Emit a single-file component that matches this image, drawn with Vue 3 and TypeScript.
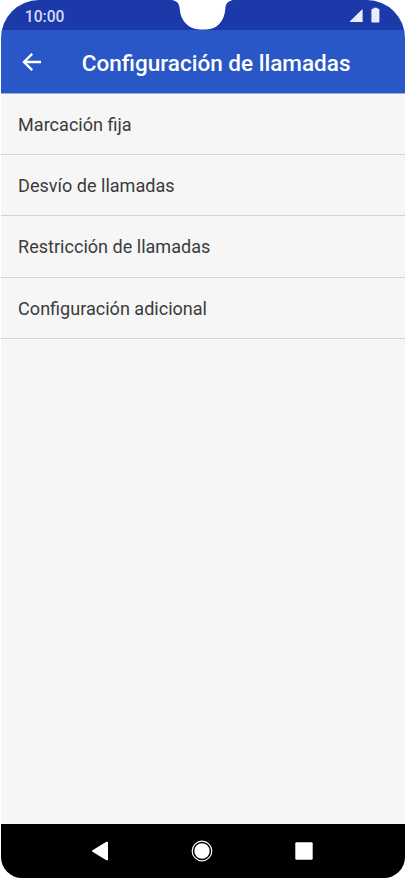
<script setup lang="ts">
const title = 'Configuración de llamadas'
const items: string[] = [
  'Marcación fija',
  'Desvío de llamadas',
  'Restricción de llamadas',
  'Configuración adicional',
]
</script>

<template>
  <div class="phone">
    <div class="status">
      <span class="time">10:00</span>
      <svg class="indicators" width="32" height="16" viewBox="0 0 32 16">
        <path d="M0 14.900V14.200L12 2.400H12.600V14.900Z" />
        <path d="M23.600 0.800H27.400V1.800H28.400Q29.400 1.800 29.400 2.800V14.500Q29.400 15.500 28.400 15.500H22.400Q21.400 15.500 21.400 14.500V2.800Q21.400 1.800 22.400 1.800H23.600Z" />
      </svg>
      <svg class="notch" width="66" height="30" viewBox="0 0 66 30">
        <path d="M2 0C7.500 1 9.500 4 9.700 9C10.500 21 19 29.500 30 29.500H36C47 29.500 54.500 21 55.300 9C55.500 4 57.500 1 63 0Z" />
      </svg>
    </div>
    <header class="bar">
      <button class="back" aria-label="Atrás">
        <svg width="20" height="20" viewBox="0 0 20 20">
          <path d="M19 10H2.500M10.200 1.800L2 10L10.200 18.200" />
        </svg>
      </button>
      <h1 class="title">{{ title }}</h1>
    </header>
    <ul class="list">
      <li v-for="item in items" :key="item" class="row">{{ item }}</li>
    </ul>
    <nav class="nav">
      <svg width="18" height="20" viewBox="0 0 18 20">
        <path d="M1.500 9.200L15 1.100Q17 0.200 17 1.600V18.400Q17 19.800 15 18.900L1.500 10.800Q0.300 10 1.500 9.200Z" />
      </svg>
      <svg width="22" height="22" viewBox="0 0 22 22">
        <circle class="ring" cx="11" cy="11" r="9.800" />
        <circle cx="11" cy="11" r="7.700" />
      </svg>
      <svg width="18" height="18" viewBox="0 0 18 18">
        <rect x="0.300" y="0.300" width="17.400" height="17.400" rx="1.200" />
      </svg>
    </nav>
  </div>
</template>

<style>
body {
  background: #fff;
}
</style>

<style scoped>
.phone {
  box-sizing: border-box;
  width: 404px;
  height: 877.500px;
  margin-left: 0.500px;
  display: flex;
  flex-direction: column;
  overflow: hidden;
  border-radius: 38px 38px 21px 21px;
  background: #f6f6f6;
  font-family: Roboto, sans-serif;
}
.status {
  position: relative;
  flex: none;
  height: 30px;
  box-sizing: border-box;
  padding: 0 22.500px 0 24.300px;
  display: flex;
  align-items: center;
  justify-content: space-between;
  background: #1c39a9;
}
.time {
  padding-top: 4px;
  font-size: 15.600px;
  font-weight: 500;
  line-height: 20px;
  color: #d3dcf7;
}
.indicators {
  fill: #e9eefc;
}
.notch {
  position: absolute;
  left: 169.300px;
  top: 0;
  fill: #fff;
}
.bar {
  flex: none;
  height: 64px;
  box-sizing: border-box;
  border-bottom: 1px solid #9aaee6;
  padding-left: 21.300px;
  display: flex;
  align-items: center;
  background: #2a57c7;
}
.back {
  display: flex;
  padding: 0;
  border: 0;
  background: none;
}
.back svg {
  fill: none;
  stroke: #fff;
  stroke-width: 2.400;
}
.title {
  margin: 5px 0 0 40px;
  font-size: 22.530px;
  font-weight: 500;
  line-height: 28px;
  color: #fff;
  white-space: nowrap;
}
.list {
  flex: 1;
  margin: 0;
  padding: 0;
  list-style: none;
}
.row {
  box-sizing: border-box;
  height: 61.200px;
  padding: 1px 17.600px 0;
  display: flex;
  align-items: center;
  border-bottom: 1px solid #d3d3d3;
  font-size: 18.060px;
  color: #3b3b3b;
}
.nav {
  flex: none;
  height: 53.500px;
  box-sizing: border-box;
  padding: 0 92px 0 90.500px;
  display: flex;
  align-items: center;
  justify-content: space-between;
  background: #000;
  fill: #fff;
}
.ring {
  fill: none;
  stroke: #fff;
  stroke-width: 1.200;
}
</style>
